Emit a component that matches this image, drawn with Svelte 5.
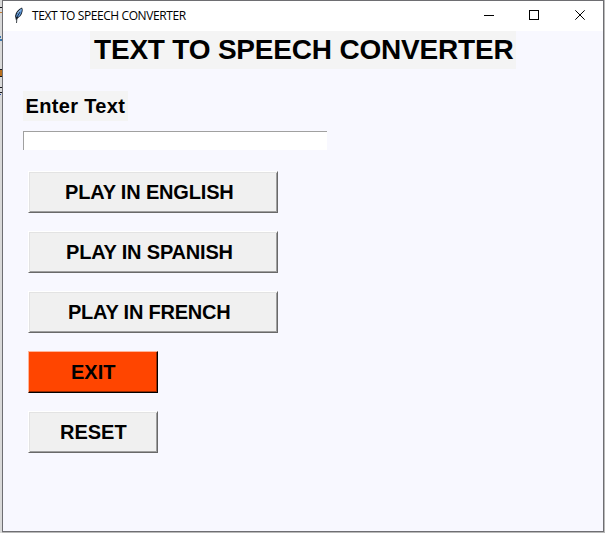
<script>
  const plays = [
    { text: 'PLAY IN ENGLISH', cls: 'english' },
    { text: 'PLAY IN SPANISH', cls: 'spanish' },
    { text: 'PLAY IN FRENCH', cls: 'french' },
  ];
</script>

<div class="desktop">
  <svg class="behind" width="3" height="110" shape-rendering="crispEdges">
    <path d="M0 7.5h2M0 69.5h3M0 76.5h3M0 87.5h3M0 92.5h2" stroke="#15151c" />
    <path d="M0 12.5h2" stroke="#c07b35" />
    <path d="M0 37h1M0 40h2" stroke="#3c76ad" stroke-width="2" />
    <path d="M0 70h2v6h-2z" fill="#b96f1d" />
    <path d="M0 94.5h1" stroke="#2949a0" />
  </svg>
  <div class="window">
    <header>
      <svg class="feather" width="12" height="18" viewBox="0 0 12 18">
        <path d="M3 14.5L2 10Q3 4 9 1.5Q11 5 7.5 10L4 13z" fill="#1b2632" />
        <path d="M3.2 11Q3.6 6 8.8 2.6Q9.4 6 6.3 10.4z" fill="#5f9be0" />
        <path d="M3.5 17L4 11L7 6" fill="none" stroke="#101820" stroke-width=".8" />
        <path d="M4.5 7L8 3.4" stroke="#a9c5df" />
      </svg>
      <span class="caption">TEXT TO SPEECH CONVERTER</span>
      <svg class="controls" width="103" height="12" fill="none" stroke="#000">
        <path d="M0 5.5h10" shape-rendering="crispEdges" />
        <rect x="45.5" y=".5" width="9" height="9" shape-rendering="crispEdges" />
        <path d="M91.3 .3l9.4 9.4M100.7 .3l-9.4 9.4" />
      </svg>
    </header>
    <main>
      <h1><span>TEXT TO SPEECH CONVERTER</span></h1>
      <label for="message"><span>Enter Text</span></label>
      <input id="message" type="text" />
      <div class="buttons">
        {#each plays as play}
          <button class={play.cls}><span>{play.text}</span></button>
        {/each}
        <button class="exit"><span>EXIT</span></button>
        <button class="reset"><span>RESET</span></button>
      </div>
    </main>
  </div>
</div>

<style>
  .desktop {
    position: relative;
    box-sizing: border-box;
    width: 605px;
    height: 533px;
    padding: 0 1px 1px 2px;
    background: linear-gradient(90deg, #d9d9d9 0 2px, #b9b9b9 2px);
    overflow: hidden;
  }
  .behind { position: absolute; left: 0; top: 0; }
  .window {
    position: relative;
    box-sizing: border-box;
    width: 602px;
    height: 532px;
    border: 1px solid #6e6e72;
    background: #f8f8ff;
    font-family: "Liberation Sans", Arial, sans-serif;
    color: #000;
  }
  header {
    display: flex;
    align-items: flex-start;
    height: 30px;
    background: #fff;
  }
  .feather { margin: 5px 0 0 10px; }
  .caption {
    width: 300px;
    margin: 6px 0 0 7px;
    font: 12px/18px "Open Sans", "Noto Sans", sans-serif;
    letter-spacing: -0.41px;
    white-space: nowrap;
  }
  .controls { margin: 9px 0 0 152px; }
  main { display: flex; flex-direction: column; align-items: flex-start; }
  h1, label {
    display: flex;
    box-sizing: border-box;
    background: #f4f4f4;
    font-weight: bold;
    white-space: nowrap;
  }
  h1 {
    width: 426px;
    height: 38px;
    margin: 0 0 0 87px;
    padding-left: 4px;
    font-size: 28px;
    line-height: 37px;
    letter-spacing: -0.2px;
  }
  label {
    width: 105px;
    height: 30px;
    margin: 22px 0 0 20px;
    padding-left: 2.5px;
    font-size: 20px;
    line-height: 30px;
    letter-spacing: 0.33px;
  }
  input {
    box-sizing: border-box;
    width: 304px;
    height: 19px;
    margin: 10px 0 0 20px;
    padding: 0 2px;
    border: solid #a0a0a0;
    border-width: 1px 0 0 1px;
    border-radius: 0;
    outline: none;
    background: #fff;
  }
  .buttons {
    display: flex;
    flex-direction: column;
    gap: 18px;
    margin: 21px 0 0 25px;
  }
  button {
    box-sizing: border-box;
    width: 250px;
    height: 42px;
    padding: 0;
    border: 1px solid;
    border-color: #fff #696969 #696969 #fff;
    border-radius: 0;
    background: #f0f0f0;
    box-shadow: inset 1px 1px #e3e3e3, inset -1px -1px #a0a0a0;
    color: #000;
    font: bold 20px/40px "Liberation Sans", Arial, sans-serif;
    text-align: left;
    white-space: nowrap;
  }
  .english { padding-left: 36px; letter-spacing: -0.17px; }
  .spanish { padding-left: 37px; letter-spacing: -0.19px; }
  .french { padding-left: 39px; letter-spacing: -0.22px; }
  .exit, .reset { width: 130px; }
  .exit {
    padding-left: 42px;
    border-color: #ffb598 #000 #000 #ffb598;
    background: #ff4500;
    box-shadow: inset -1px -1px #992900;
  }
  .reset { padding-left: 31px; }
</style>
